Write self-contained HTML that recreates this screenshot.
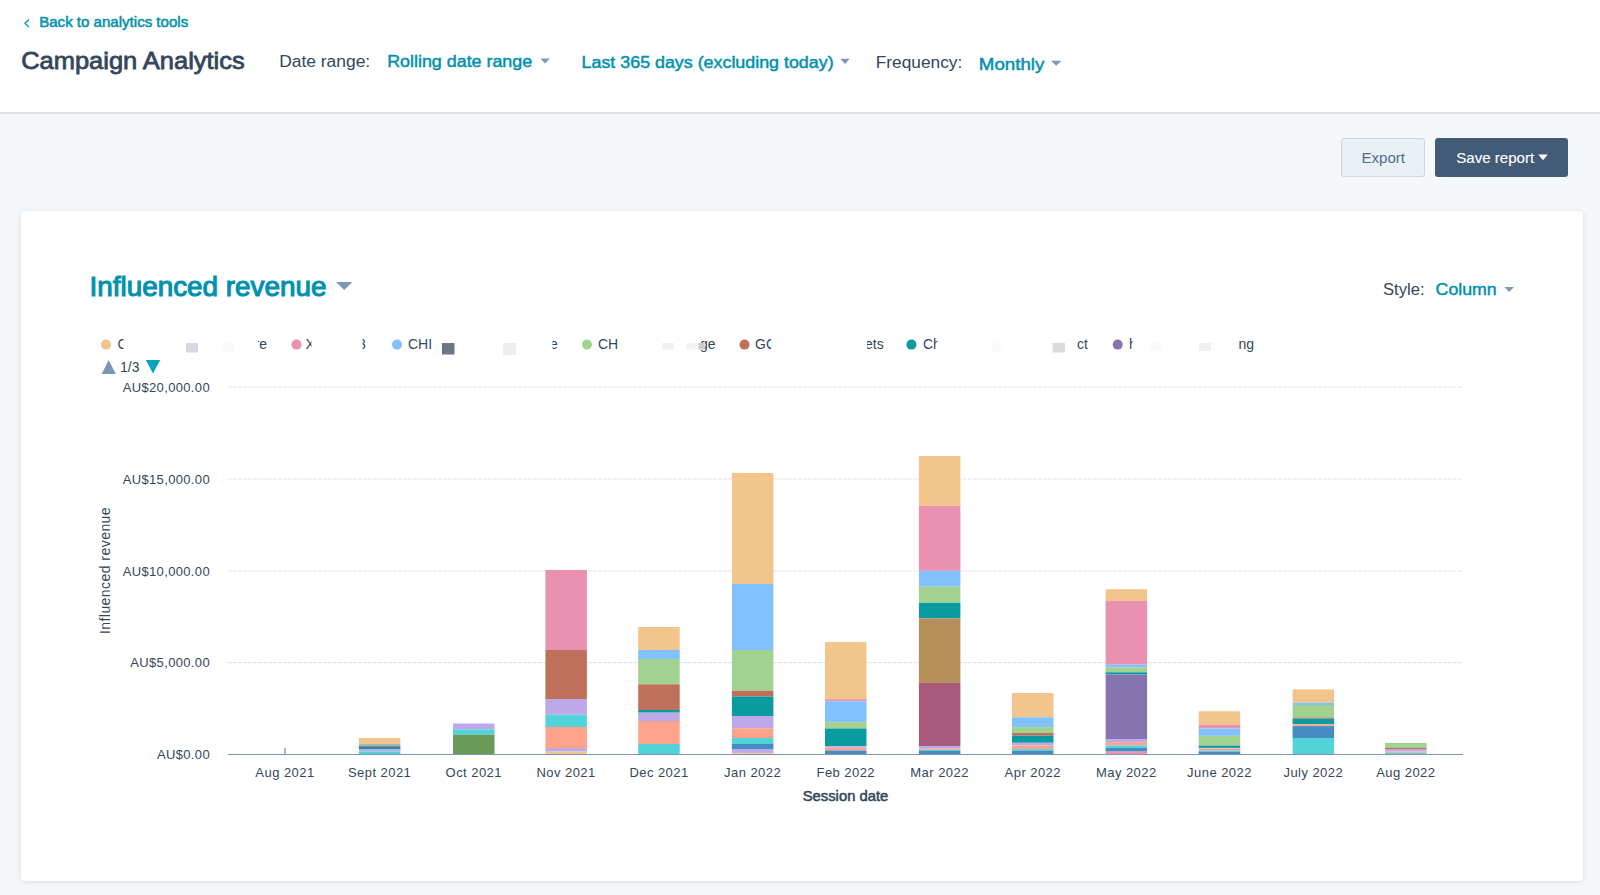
<!DOCTYPE html>
<html><head><meta charset="utf-8"><style>
html,body{margin:0;padding:0;width:1600px;height:895px;overflow:hidden;background:#f5f8fa;font-family:"Liberation Sans",sans-serif;}
.hdr{position:absolute;left:0;top:0;width:1600px;height:112px;background:#fff;border-bottom:2px solid #dfe3eb;}
.card{position:absolute;left:21px;top:211px;width:1562px;height:670px;background:#fff;border-radius:4px;box-shadow:0 1px 6px rgba(45,62,80,0.14);}
.btn1{position:absolute;left:1341px;top:138px;width:82px;height:37px;background:#eaf0f6;border:1px solid #cbd6e2;border-radius:3px;}
.btn2{position:absolute;left:1435px;top:138px;width:133px;height:39px;background:#425b76;border-radius:3px;}
svg{position:absolute;left:0;top:0;}
text{font-family:"Liberation Sans",sans-serif;}
.yl{font-size:13px;fill:#33475b;letter-spacing:0.35px;}
.xl{font-size:13px;fill:#33475b;letter-spacing:0.45px;}
.lg{font-size:14px;fill:#33475b;}
</style></head><body>
<div class="hdr"></div>
<div class="btn1"></div>
<div class="btn2"></div>
<div class="card"></div>
<svg width="1600" height="895" viewBox="0 0 1600 895">
<defs><clipPath id="c0"><rect x="112.5" y="330" width="11.0" height="30"/></clipPath><clipPath id="c1"><rect x="258" y="330" width="76.5" height="30"/></clipPath><clipPath id="c2"><rect x="300.5" y="330" width="11.0" height="30"/></clipPath><clipPath id="c3"><rect x="362.5" y="330" width="75.5" height="30"/></clipPath><clipPath id="c4"><rect x="403" y="330" width="32" height="30"/></clipPath><clipPath id="c5"><rect x="552.5" y="330" width="77.5" height="30"/></clipPath><clipPath id="c6"><rect x="700.5" y="330" width="79.5" height="30"/></clipPath><clipPath id="c7"><rect x="750" y="330" width="21.200000000000045" height="30"/></clipPath><clipPath id="c8"><rect x="867" y="330" width="78" height="30"/></clipPath><clipPath id="c9"><rect x="918" y="330" width="19.5" height="30"/></clipPath><clipPath id="c10"><rect x="1124" y="330" width="8.799999999999955" height="30"/></clipPath></defs>
<path d="M29 19.5 L25 23.3 L29 27.1" fill="none" stroke="#0091ae" stroke-width="1.25"/><text x="39.2" y="27" font-size="14" fill="#0091ae" stroke="#0091ae" stroke-width="0.5" textLength="149" lengthAdjust="spacingAndGlyphs">Back to analytics tools</text><text x="21.2" y="69.4" font-size="24" fill="#33475b" stroke="#33475b" stroke-width="0.8" textLength="223.5" lengthAdjust="spacingAndGlyphs">Campaign Analytics</text><text x="279.2" y="67.3" font-size="16" fill="#33475b" textLength="91" lengthAdjust="spacingAndGlyphs">Date range:</text><text x="387.2" y="67.3" font-size="16" fill="#0091ae" stroke="#0091ae" stroke-width="0.45" textLength="145" lengthAdjust="spacingAndGlyphs">Rolling date range</text><path d="M540.5 58.4 L549.9 58.4 L545.2 63.4 Z" fill="#7c98b6"/><text x="581.6" y="67.6" font-size="16" fill="#0091ae" stroke="#0091ae" stroke-width="0.45" textLength="252" lengthAdjust="spacingAndGlyphs">Last 365 days (excluding today)</text><path d="M840.3 58.7 L849.8 58.7 L845 64 Z" fill="#7c98b6"/><text x="875.8" y="67.8" font-size="16" fill="#33475b" textLength="86.5" lengthAdjust="spacingAndGlyphs">Frequency:</text><text x="978.8" y="70.3" font-size="16" fill="#0091ae" stroke="#0091ae" stroke-width="0.45" textLength="65.5" lengthAdjust="spacingAndGlyphs">Monthly</text><path d="M1051 60.8 L1061.5 60.8 L1056.2 65.7 Z" fill="#7c98b6"/><text x="1361.5" y="162.9" font-size="14" fill="#506e91" textLength="43.5" lengthAdjust="spacingAndGlyphs">Export</text><text x="1456.2" y="162.9" font-size="14" fill="#ffffff" stroke="#ffffff" stroke-width="0.12" textLength="78" lengthAdjust="spacingAndGlyphs">Save report</text><path d="M1538.3 154.5 L1547.7 154.5 L1543 160.3 Z" fill="#ffffff"/><text x="89.5" y="296" font-size="28" fill="#0091ae" stroke="#0091ae" stroke-width="1.1" textLength="237" lengthAdjust="spacingAndGlyphs">Influenced revenue</text><path d="M336 282 L352.5 282 L344.2 290 Z" fill="#7c98b6"/><text x="1383" y="295.3" font-size="16" fill="#33475b" textLength="41.5" lengthAdjust="spacingAndGlyphs">Style:</text><text x="1435.6" y="295.3" font-size="16" fill="#0091ae" stroke="#0091ae" stroke-width="0.45" textLength="61" lengthAdjust="spacingAndGlyphs">Column</text><path d="M1504.5 287 L1514 287 L1509.2 292 Z" fill="#7c98b6"/>

<circle cx="106" cy="344.6" r="5" fill="#f2c58c"/>
<rect x="186" y="343" width="12" height="9.5" fill="#d5d8dd"/>
<rect x="223" y="343" width="12" height="9.5" fill="#fafafa"/>
<circle cx="296.5" cy="344.6" r="5" fill="#ea90b1"/>
<circle cx="397" cy="344.6" r="5" fill="#81c1fd"/>
<rect x="434" y="343" width="8" height="12" fill="#fafafa"/>
<rect x="442" y="343" width="12.5" height="11.5" fill="#6a7686"/>
<rect x="503" y="343" width="13" height="12" fill="#eceef0"/>
<circle cx="587" cy="344.6" r="5" fill="#a2d28f"/>
<rect x="662" y="343" width="12" height="6.5" fill="#eff1f3"/>
<circle cx="744.5" cy="344.6" r="5" fill="#c0705a"/>
<circle cx="911.4" cy="344.6" r="5" fill="#0a9ba1"/>
<rect x="992" y="343" width="12" height="9" fill="#fbfbfb"/>
<rect x="1052.6" y="343" width="12.4" height="9.5" fill="#d9dbde"/>
<circle cx="1117.7" cy="344.6" r="5" fill="#8674b0"/>
<rect x="1150" y="343" width="12.5" height="8" fill="#fafafa"/>
<rect x="1199" y="343" width="12" height="8" fill="#eef0f2"/>
<text x="117.5" y="348.7" class="lg" clip-path="url(#c0)">C</text><text x="254.5" y="348.7" class="lg" clip-path="url(#c1)">re</text><text x="305.5" y="348.7" class="lg" clip-path="url(#c2)">X</text><text x="358" y="348.7" class="lg" clip-path="url(#c3)">3</text><text x="408" y="348.7" class="lg" clip-path="url(#c4)">CHI</text><text x="550" y="348.7" class="lg" clip-path="url(#c5)">e</text><text x="598" y="348.7" class="lg">CH</text><text x="700" y="348.7" class="lg" clip-path="url(#c6)">ge</text><text x="755" y="348.7" class="lg" clip-path="url(#c7)">GC</text><text x="865" y="348.7" class="lg" clip-path="url(#c8)">ets</text><text x="923" y="348.7" class="lg" clip-path="url(#c9)">Ch</text><text x="1077" y="348.7" class="lg">ct</text><text x="1129" y="348.7" class="lg" clip-path="url(#c10)">h</text><text x="1238.5" y="348.7" class="lg">ng</text>
<rect x="686" y="343" width="12" height="6.5" fill="#f3f4f5"/>
<rect x="698.5" y="343" width="6" height="6.5" fill="#c8ccd1"/>
<path d="M101.7 374 L108.7 360 L115.8 374 Z" fill="#7b96b5"/>
<text x="120" y="372" class="lg">1/3</text>
<path d="M145.8 360 L160.2 360 L153 373.5 Z" fill="#00a4bd"/>

<line x1="228" y1="387" x2="1463" y2="387" stroke="#dfe3eb" stroke-width="1.2" stroke-dasharray="3.8 1.2"/><line x1="228" y1="479" x2="1463" y2="479" stroke="#dfe3eb" stroke-width="1.2" stroke-dasharray="3.8 1.2"/><line x1="228" y1="571" x2="1463" y2="571" stroke="#dfe3eb" stroke-width="1.2" stroke-dasharray="3.8 1.2"/><line x1="228" y1="662.7" x2="1463" y2="662.7" stroke="#dfe3eb" stroke-width="1.2" stroke-dasharray="3.8 1.2"/>
<text x="210" y="391.6" text-anchor="end" class="yl">AU$20,000.00</text><text x="210" y="483.6" text-anchor="end" class="yl">AU$15,000.00</text><text x="210" y="575.6" text-anchor="end" class="yl">AU$10,000.00</text><text x="210" y="667.3000000000001" text-anchor="end" class="yl">AU$5,000.00</text><text x="210" y="759.1" text-anchor="end" class="yl">AU$0.00</text>
<text transform="translate(109.8 570.5) rotate(-90)" text-anchor="middle" font-size="14" fill="#33475b" letter-spacing="0.45">Influenced revenue</text>
<rect x="358.9" y="738" width="41.5" height="6" fill="#f2c58c"/><rect x="358.9" y="744" width="41.5" height="1.5" fill="#81c1fd"/><rect x="358.9" y="745.5" width="41.5" height="1.5" fill="#c0705a"/><rect x="358.9" y="747" width="41.5" height="2" fill="#0a9ba1"/><rect x="358.9" y="749" width="41.5" height="2.5" fill="#bda8ea"/><rect x="358.9" y="751.5" width="41.5" height="3.0" fill="#51d3d9"/><rect x="453.0" y="723.5" width="41.5" height="6.0" fill="#bda8ea"/><rect x="453.0" y="729.5" width="41.5" height="5.2" fill="#51d3d9"/><rect x="453.0" y="734.7" width="41.5" height="19.8" fill="#6a9a57"/><rect x="545.4" y="570" width="41.5" height="80" fill="#ea90b1"/><rect x="545.4" y="650" width="41.5" height="49" fill="#c0705a"/><rect x="545.4" y="699" width="41.5" height="15.7" fill="#bda8ea"/><rect x="545.4" y="714.7" width="41.5" height="12.3" fill="#51d3d9"/><rect x="545.4" y="727" width="41.5" height="21" fill="#fea38b"/><rect x="545.4" y="748" width="41.5" height="3.6" fill="#bda8ea"/><rect x="545.4" y="751.6" width="41.5" height="2.9" fill="#f2c58c"/><rect x="638.2" y="627" width="41.5" height="23" fill="#f2c58c"/><rect x="638.2" y="650" width="41.5" height="9" fill="#81c1fd"/><rect x="638.2" y="659" width="41.5" height="25.3" fill="#a2d28f"/><rect x="638.2" y="684.3" width="41.5" height="25.7" fill="#c0705a"/><rect x="638.2" y="710" width="41.5" height="2.7" fill="#0a9ba1"/><rect x="638.2" y="712.7" width="41.5" height="8.3" fill="#bda8ea"/><rect x="638.2" y="721" width="41.5" height="23" fill="#fea38b"/><rect x="638.2" y="744" width="41.5" height="10.5" fill="#51d3d9"/><rect x="731.9" y="473" width="41.5" height="111" fill="#f2c58c"/><rect x="731.9" y="584" width="41.5" height="66" fill="#81c1fd"/><rect x="731.9" y="650" width="41.5" height="40.7" fill="#a2d28f"/><rect x="731.9" y="690.7" width="41.5" height="5.8" fill="#c0705a"/><rect x="731.9" y="696.5" width="41.5" height="19.5" fill="#0a9ba1"/><rect x="731.9" y="716" width="41.5" height="12.3" fill="#bda8ea"/><rect x="731.9" y="728.3" width="41.5" height="9.7" fill="#fea38b"/><rect x="731.9" y="738" width="41.5" height="6" fill="#51d3d9"/><rect x="731.9" y="744" width="41.5" height="5" fill="#468cc4"/><rect x="731.9" y="749" width="41.5" height="3.9" fill="#bda8ea"/><rect x="731.9" y="752.9" width="41.5" height="1.6" fill="#f2c58c"/><rect x="825.0" y="642" width="41.5" height="57.2" fill="#f2c58c"/><rect x="825.0" y="699.2" width="41.5" height="2.1" fill="#ea90b1"/><rect x="825.0" y="701.3" width="41.5" height="20.9" fill="#81c1fd"/><rect x="825.0" y="722.2" width="41.5" height="6.3" fill="#a2d28f"/><rect x="825.0" y="728.5" width="41.5" height="17.7" fill="#0a9ba1"/><rect x="825.0" y="746.2" width="41.5" height="1.5" fill="#bda8ea"/><rect x="825.0" y="747.7" width="41.5" height="2.8" fill="#fea38b"/><rect x="825.0" y="750.5" width="41.5" height="4.0" fill="#468cc4"/><rect x="918.9" y="456" width="41.5" height="50" fill="#f2c58c"/><rect x="918.9" y="506" width="41.5" height="64.8" fill="#ea90b1"/><rect x="918.9" y="570.8" width="41.5" height="15.9" fill="#81c1fd"/><rect x="918.9" y="586.7" width="41.5" height="16.1" fill="#a2d28f"/><rect x="918.9" y="602.8" width="41.5" height="15.6" fill="#0a9ba1"/><rect x="918.9" y="618.4" width="41.5" height="64.5" fill="#b68f5a"/><rect x="918.9" y="682.9" width="41.5" height="63.1" fill="#a85a7a"/><rect x="918.9" y="746" width="41.5" height="2.3" fill="#bda8ea"/><rect x="918.9" y="748.3" width="41.5" height="1.5" fill="#fea38b"/><rect x="918.9" y="749.8" width="41.5" height="1.2" fill="#51d3d9"/><rect x="918.9" y="751" width="41.5" height="3.5" fill="#468cc4"/><rect x="1012.0" y="693" width="41.5" height="24.3" fill="#f2c58c"/><rect x="1012.0" y="717.3" width="41.5" height="9.8" fill="#81c1fd"/><rect x="1012.0" y="727.1" width="41.5" height="5.9" fill="#a2d28f"/><rect x="1012.0" y="733" width="41.5" height="2.7" fill="#c0705a"/><rect x="1012.0" y="735.7" width="41.5" height="7.1" fill="#0a9ba1"/><rect x="1012.0" y="742.8" width="41.5" height="2.7" fill="#bda8ea"/><rect x="1012.0" y="745.5" width="41.5" height="3.6" fill="#fea38b"/><rect x="1012.0" y="749.1" width="41.5" height="1.7" fill="#51d3d9"/><rect x="1012.0" y="750.8" width="41.5" height="3.7" fill="#468cc4"/><rect x="1105.6" y="589.2" width="41.5" height="11.8" fill="#f2c58c"/><rect x="1105.6" y="601" width="41.5" height="63.7" fill="#ea90b1"/><rect x="1105.6" y="664.7" width="41.5" height="2.9" fill="#81c1fd"/><rect x="1105.6" y="667.6" width="41.5" height="4.7" fill="#a2d28f"/><rect x="1105.6" y="672.3" width="41.5" height="2.2" fill="#0a9ba1"/><rect x="1105.6" y="674.5" width="41.5" height="64.6" fill="#8674b0"/><rect x="1105.6" y="739.1" width="41.5" height="3.0" fill="#bda8ea"/><rect x="1105.6" y="742.1" width="41.5" height="3.4" fill="#fea38b"/><rect x="1105.6" y="745.5" width="41.5" height="2.5" fill="#51d3d9"/><rect x="1105.6" y="748" width="41.5" height="3.6" fill="#468cc4"/><rect x="1105.6" y="751.6" width="41.5" height="2.9" fill="#ea90b1"/><rect x="1198.7" y="711.3" width="41.5" height="13.5" fill="#f2c58c"/><rect x="1198.7" y="724.8" width="41.5" height="3.7" fill="#ea90b1"/><rect x="1198.7" y="728.5" width="41.5" height="7.4" fill="#81c1fd"/><rect x="1198.7" y="735.9" width="41.5" height="9.7" fill="#a2d28f"/><rect x="1198.7" y="745.6" width="41.5" height="2.3" fill="#0a9ba1"/><rect x="1198.7" y="747.9" width="41.5" height="0.6" fill="#bda8ea"/><rect x="1198.7" y="748.5" width="41.5" height="1.9" fill="#fea38b"/><rect x="1198.7" y="750.4" width="41.5" height="1.2" fill="#51d3d9"/><rect x="1198.7" y="751.6" width="41.5" height="2.9" fill="#468cc4"/><rect x="1292.6" y="689.4" width="41.5" height="13.4" fill="#f2c58c"/><rect x="1292.6" y="702.8" width="41.5" height="2.2" fill="#81c1fd"/><rect x="1292.6" y="705" width="41.5" height="12.4" fill="#a2d28f"/><rect x="1292.6" y="717.4" width="41.5" height="1.2" fill="#c0705a"/><rect x="1292.6" y="718.6" width="41.5" height="5.7" fill="#0a9ba1"/><rect x="1292.6" y="724.3" width="41.5" height="1.8" fill="#fea38b"/><rect x="1292.6" y="726.1" width="41.5" height="11.9" fill="#468cc4"/><rect x="1292.6" y="738" width="41.5" height="16.5" fill="#51d3d9"/><rect x="1385.1" y="742.9" width="41.5" height="5.1" fill="#a2d28f"/><rect x="1385.1" y="748" width="41.5" height="1" fill="#c0705a"/><rect x="1385.1" y="749" width="41.5" height="2.5" fill="#bda8ea"/><rect x="1385.1" y="751.5" width="41.5" height="1.3" fill="#fea38b"/><rect x="1385.1" y="752.8" width="41.5" height="1.7" fill="#51d3d9"/><rect x="284" y="748" width="2" height="6.5" fill="#a8b8cf"/>
<rect x="228" y="754" width="1235" height="1" fill="#7c98b6"/>
<text x="285" y="776.8" text-anchor="middle" class="xl">Aug 2021</text><text x="379.6" y="776.8" text-anchor="middle" class="xl">Sept 2021</text><text x="473.8" y="776.8" text-anchor="middle" class="xl">Oct 2021</text><text x="566.1" y="776.8" text-anchor="middle" class="xl">Nov 2021</text><text x="659.0" y="776.8" text-anchor="middle" class="xl">Dec 2021</text><text x="752.6" y="776.8" text-anchor="middle" class="xl">Jan 2022</text><text x="845.8" y="776.8" text-anchor="middle" class="xl">Feb 2022</text><text x="939.6" y="776.8" text-anchor="middle" class="xl">Mar 2022</text><text x="1032.8" y="776.8" text-anchor="middle" class="xl">Apr 2022</text><text x="1126.3" y="776.8" text-anchor="middle" class="xl">May 2022</text><text x="1219.5" y="776.8" text-anchor="middle" class="xl">June 2022</text><text x="1313.3" y="776.8" text-anchor="middle" class="xl">July 2022</text><text x="1405.8" y="776.8" text-anchor="middle" class="xl">Aug 2022</text>
<text x="845.5" y="800.7" font-size="14" fill="#33475b" stroke="#33475b" stroke-width="0.5" textLength="85.5" lengthAdjust="spacingAndGlyphs" text-anchor="middle">Session date</text>
</svg>
</body></html>
